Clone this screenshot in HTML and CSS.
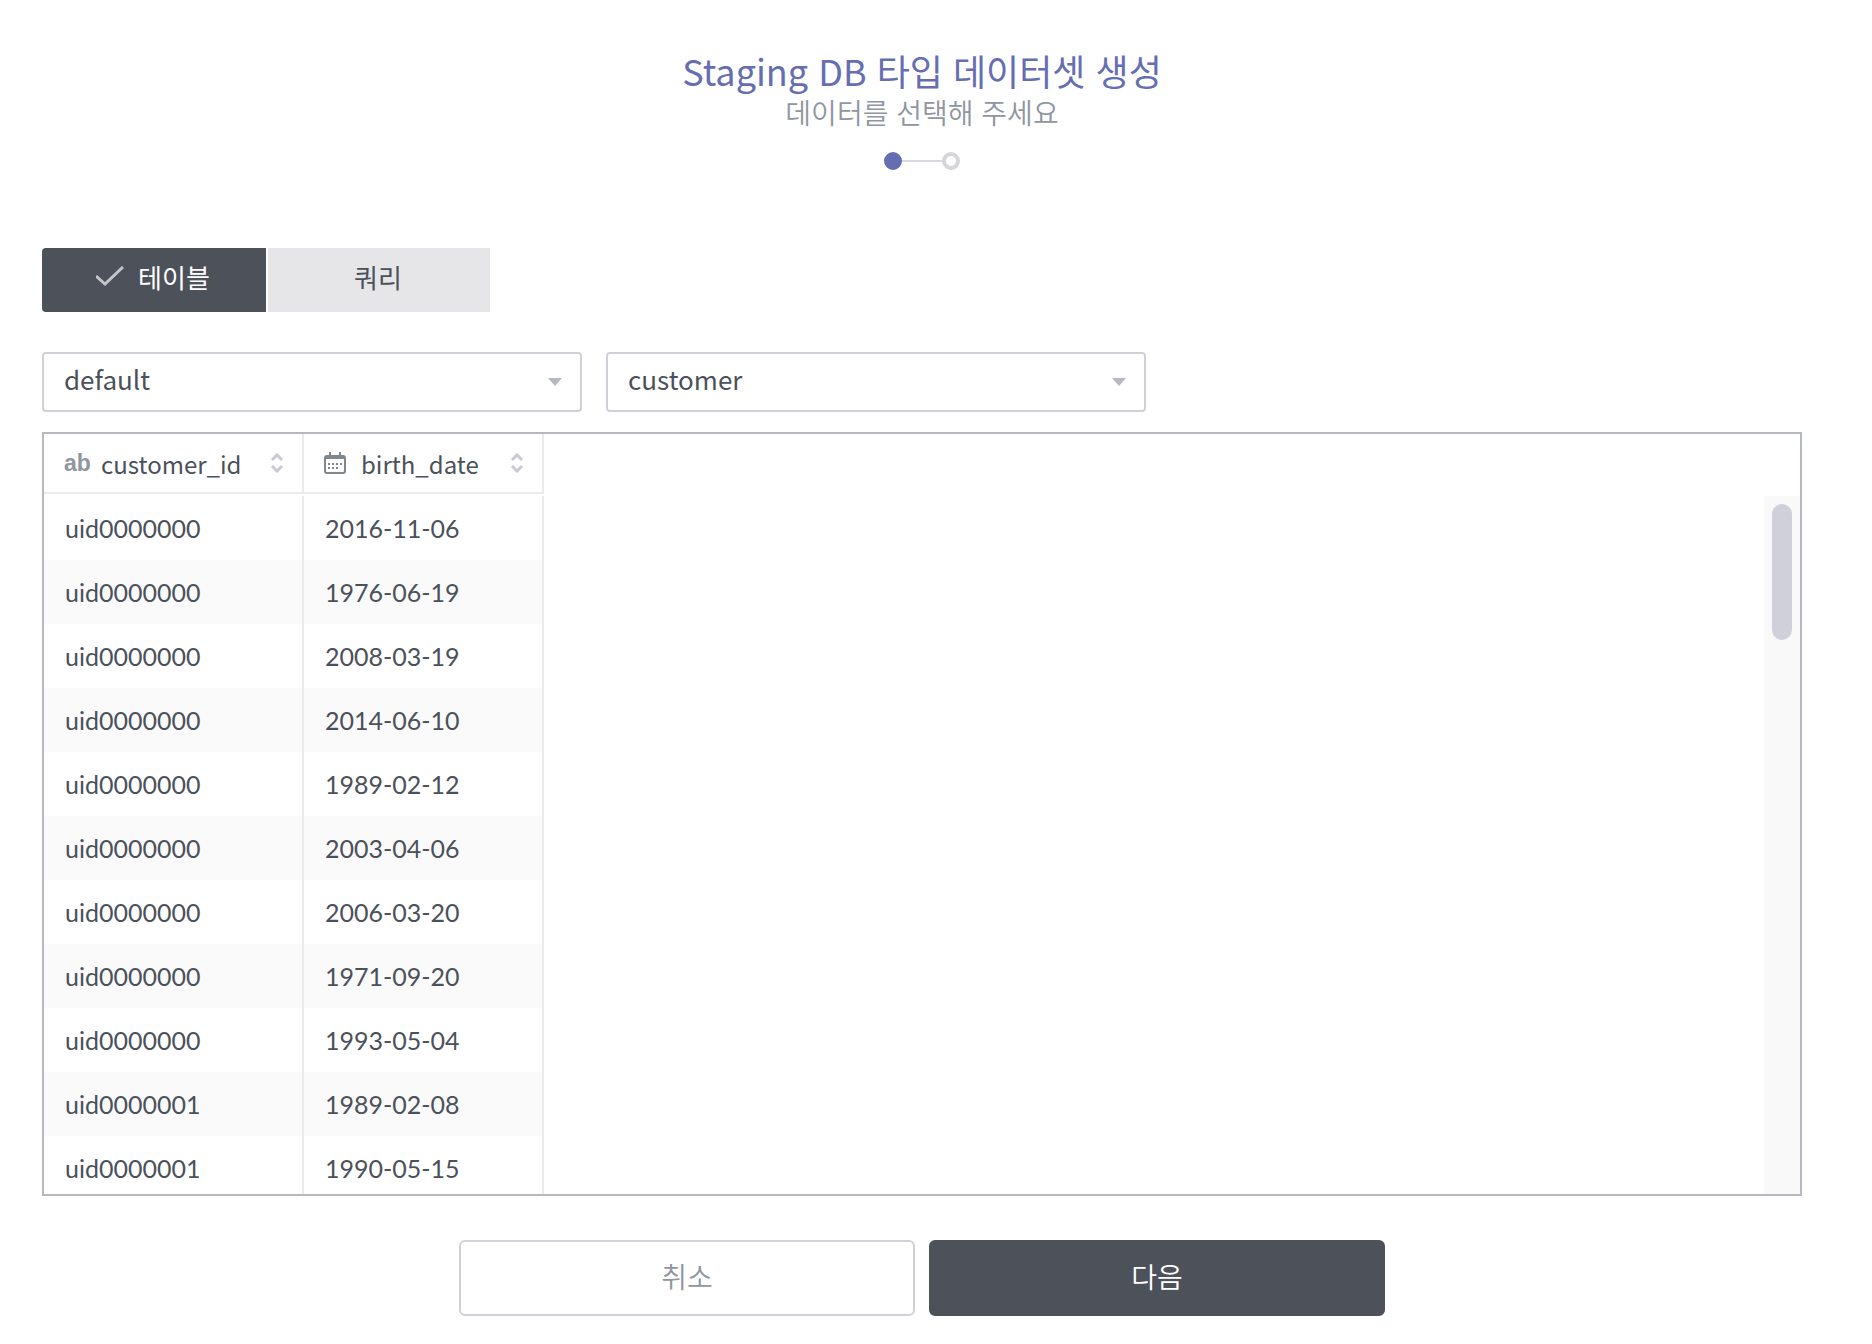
FILE: index.html
```html
<!DOCTYPE html>
<html lang="ko">
<head>
<meta charset="utf-8">
<title>Staging DB 타입 데이터셋 생성</title>
<link rel="stylesheet" href="styles.css">
</head>
<body>
<main class="page">
  <header class="head">
    <h1 class="title">Staging DB 타입 데이터셋 생성</h1>
    <p class="subtitle">데이터를 선택해 주세요</p>
    <div class="steps">
      <span class="step step-on"></span>
      <span class="step-line"></span>
      <span class="step"></span>
    </div>
  </header>

  <div class="tabs">
    <button type="button" class="tab tab-on">
      <svg class="check" viewBox="0 0 28 20"><path d="M0 10l9 8L27 1"/></svg>
      테이블
    </button>
    <button type="button" class="tab">쿼리</button>
  </div>

  <div class="filters">
    <select class="select" aria-label="데이터베이스"><option>default</option></select>
    <select class="select" aria-label="테이블"><option>customer</option></select>
  </div>

  <section class="grid">
    <table class="table">
      <colgroup><col class="col-id"><col class="col-date"></colgroup>
      <thead>
        <tr>
          <th scope="col"><div class="th">
            <span class="type-text">ab</span>
            <span class="name">customer_id</span>
            <svg class="sort" viewBox="0 0 14 20"><path d="M2 7l5-5 5 5M2 13l5 5 5-5"/></svg>
          </div></th>
          <th scope="col"><div class="th">
            <svg class="type-date" viewBox="0 0 22 22"><path d="M3 4h16q2 0 2 2v13q0 2-2 2H3q-2 0-2-2V6q0-2 2-2zM1 6h20M6 0v6M16 0v6"/><path class="dots" d="M4 12h14M4 16h11"/></svg>
            <span class="name">birth_date</span>
            <svg class="sort" viewBox="0 0 14 20"><path d="M2 7l5-5 5 5M2 13l5 5 5-5"/></svg>
          </div></th>
        </tr>
      </thead>
      <tbody>
        <tr><td>uid0000000</td><td>2016-11-06</td></tr>
        <tr><td>uid0000000</td><td>1976-06-19</td></tr>
        <tr><td>uid0000000</td><td>2008-03-19</td></tr>
        <tr><td>uid0000000</td><td>2014-06-10</td></tr>
        <tr><td>uid0000000</td><td>1989-02-12</td></tr>
        <tr><td>uid0000000</td><td>2003-04-06</td></tr>
        <tr><td>uid0000000</td><td>2006-03-20</td></tr>
        <tr><td>uid0000000</td><td>1971-09-20</td></tr>
        <tr><td>uid0000000</td><td>1993-05-04</td></tr>
        <tr><td>uid0000001</td><td>1989-02-08</td></tr>
        <tr><td>uid0000001</td><td>1990-05-15</td></tr>
      </tbody>
    </table>
    <div class="scroll"><div class="thumb"></div></div>
  </section>

  <footer class="actions">
    <button type="button" class="btn">취소</button>
    <button type="button" class="btn btn-dark">다음</button>
  </footer>
</main>
</body>
</html>
```
FILE: styles.css
```css
* { box-sizing: border-box; }

body {
  margin: 0;
  background: #fff;
  color: #4b515b;
  font-family: "Noto Sans CJK KR", sans-serif;
  font-size: 26px;
}

button, select { font: inherit; color: inherit; }

.page { padding: 46px 70px 28px 42px; }

.head {
  display: flex;
  flex-direction: column;
  align-items: center;
}

.title {
  margin: 0;
  color: #666eb2;
  font-size: 36px;
  font-weight: 400;
  line-height: 48px;
}

.subtitle {
  margin: 0;
  color: #90969f;
  font-size: 28px;
  font-weight: 350;
  line-height: 36px;
}

.steps {
  display: flex;
  align-items: center;
  margin-top: 22px;
}

.step {
  width: 18px;
  height: 18px;
  border: 4px solid #d5d5dc;
  border-radius: 50%;
}

.step-on { background: #666eb2; border-color: #666eb2; }

.step-line { width: 40px; height: 2px; background: #d9d9df; }

.tabs {
  display: flex;
  gap: 2px;
  margin-top: 78px;
}

.tab {
  display: flex;
  align-items: center;
  justify-content: center;
  gap: 14px;
  width: 222px;
  height: 64px;
  padding: 0 2px 8px 0;
  border: 0;
  background: #e6e6e8;
}

.tab-on {
  width: 224px;
  border-radius: 4px 0 0 4px;
  background: #4d515a;
  color: #fff;
}

.check {
  width: 28px;
  height: 20px;
  fill: none;
  stroke: #c3c5c8;
  stroke-width: 3;
}

.filters {
  display: flex;
  gap: 24px;
  margin-top: 40px;
}

.select {
  appearance: none;
  width: 540px;
  height: 60px;
  padding: 0 48px 8px 20px;
  border: 2px solid #d0d1d8;
  border-radius: 4px;
  background: #fff url("data:image/svg+xml,%3Csvg xmlns='http://www.w3.org/2000/svg' width='14' height='8'%3E%3Cpath d='M0 0h14L7 8z' fill='%23b7b9c2'/%3E%3C/svg%3E") no-repeat right 18px center;
}

.grid {
  display: flex;
  justify-content: space-between;
  height: 764px;
  margin-top: 20px;
  border: 2px solid #b7b9c2;
  overflow: hidden;
}

.table {
  table-layout: fixed;
  width: 500px;
  border-collapse: separate;
  border-spacing: 0;
}

.col-id { width: 260px; }
.col-date { width: 240px; }

th {
  height: 60px;
  padding: 0;
  border-right: 2px solid #ebebed;
  border-bottom: 2px solid #ebebed;
  font-size: 24px;
  font-weight: 400;
}

.th {
  display: flex;
  align-items: center;
  padding: 0 18px 0 20px;
}

.name { flex: 1; text-align: left; }

.type-text {
  width: 37px;
  color: #90969f;
  font-family: "Liberation Sans", sans-serif;
  font-size: 23px;
  font-weight: 700;
  text-align: left;
}

.type-date {
  width: 22px;
  height: 22px;
  margin-right: 15px;
  fill: none;
  stroke: #7f878c;
  stroke-width: 2;
}

.dots { stroke-dasharray: 2 2; }

.sort {
  width: 14px;
  height: 20px;
  fill: none;
  stroke: #c8c9d1;
  stroke-width: 3;
}

tbody::before { content: ""; display: block; height: 2px; }

td {
  height: 64px;
  padding: 0 21px;
  border-right: 2px solid #ebebed;
  font-family: Lato, sans-serif;
  font-size: 25px;
}

tbody tr:nth-child(even) td { background: #fafafa; }

.scroll {
  width: 36px;
  margin-top: 62px;
  padding: 8px;
  background: #f9f9f9;
}

.thumb { height: 136px; border-radius: 10px; background: #d0d0da; }

.actions {
  display: flex;
  justify-content: center;
  gap: 14px;
  margin-top: 44px;
}

.btn {
  width: 456px;
  height: 76px;
  padding: 0 0 4px;
  border: 2px solid #d0d1d8;
  border-radius: 6px;
  background: #fff;
  color: #90969f;
  font-size: 28px;
  font-weight: 350;
}

.btn-dark { border-color: #4d515a; background: #4d515a; color: #fff; }
```
